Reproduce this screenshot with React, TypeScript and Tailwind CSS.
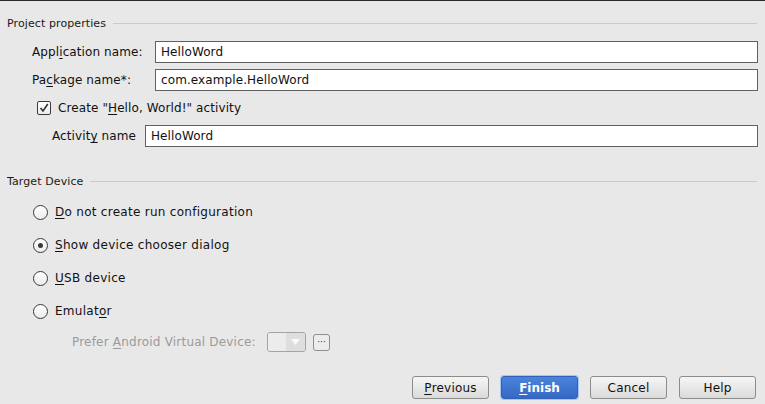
import type { ReactNode } from "react";

// New project wizard: project properties + target device
const U = ({ children }: { children: ReactNode }) => (
  <span className="underline underline-offset-[2px] decoration-[1px]">{children}</span>
);

function SectionHeader({ title }: { title: string }) {
  return (
    <div className="flex h-[14px] items-center gap-[7px] pl-[7px] pr-[8px]">
      <span className="text-[11px] leading-none tracking-[0.1px] text-[#1a1a1a]">{title}</span>
      <div className="h-px flex-1 bg-[#cacaca]" />
    </div>
  );
}

function TextField({ value, width }: { value: string; width: string }) {
  return (
    <div
      className={`flex h-[22px] ${width} items-center border border-[#606060] bg-white px-[5px] text-[12px] tracking-[0.1px] text-[#111]`}
    >
      {value}
    </div>
  );
}

function Radio({ checked, label }: { checked?: boolean; label: ReactNode }) {
  return (
    <div className="flex h-[18px] items-center pl-[33px]">
      <div className="flex h-[15px] w-[15px] items-center justify-center rounded-full border border-[#3a3a3a] bg-gradient-to-b from-white to-[#ececec]">
        {checked && <div className="h-[5px] w-[5px] rounded-full bg-[#3a3a3a]" />}
      </div>
      <span className="ml-[7px] text-[12px] tracking-[0.28px] text-[#111]">{label}</span>
    </div>
  );
}

function Button({ children, primary }: { children: ReactNode; primary?: boolean }) {
  if (primary) {
    return (
      <div className="flex h-[23px] w-[77px] items-center justify-center rounded-[3px] border border-[#2f62b8] bg-gradient-to-b from-[#4a84dc] to-[#3568c4] text-[12px] font-bold text-white shadow-[0_0_0_1px_#a9c6ee]">
        {children}
      </div>
    );
  }
  return (
    <div className="flex h-[23px] w-[77px] items-center justify-center rounded-[3px] border border-[#8c8c8c] bg-gradient-to-b from-[#f6f6f6] to-[#dadada] text-[12px] tracking-[0.2px] text-[#111]">
      {children}
    </div>
  );
}

export default function App() {
  return (
    <div
      className="flex h-[404px] w-[765px] flex-col overflow-hidden border-t border-[#2b2b2b] bg-[#e8e8e8] text-[12px] text-[#111]"
      style={{ fontFamily: "'DejaVu Sans', sans-serif" }}
    >
      <div className="mt-[15px]">
        <SectionHeader title="Project properties" />
      </div>

      <div className="mt-[11px] flex h-[22px] items-center">
        <span className="w-[155px] pl-[32px] tracking-[0.1px]">
          Appl<U>i</U>cation name:
        </span>
        <TextField value="HelloWord" width="w-[603px]" />
      </div>
      <div className="mt-[6px] flex h-[22px] items-center">
        <span className="w-[155px] pl-[32px] tracking-[0.1px]">
          Pa<U>c</U>kage name*:
        </span>
        <TextField value="com.example.HelloWord" width="w-[603px]" />
      </div>

      <div className="mt-[9px] flex h-[16px] items-center pl-[37px]">
        <div className="flex h-[14px] w-[14px] items-center justify-center rounded-[2px] border border-[#3a3a3a] bg-gradient-to-b from-white to-[#ececec]">
          <svg width="10" height="10" viewBox="0 0 10 10">
            <path d="M1.5 5 L4 8 L8.8 1" fill="none" stroke="#333" strokeWidth="1.6" />
          </svg>
        </div>
        <span className="ml-[7px] tracking-[0.1px]">
          Create "<U>H</U>ello, World!" activity
        </span>
      </div>

      <div className="mt-[9px] flex h-[22px] items-center">
        <span className="w-[145px] pl-[52px] tracking-[0.1px]">
          Activit<U>y</U> name
        </span>
        <TextField value="HelloWord" width="w-[613px]" />
      </div>

      <div className="mt-[27px]">
        <SectionHeader title="Target Device" />
      </div>

      <div className="mt-[15px] flex flex-col gap-[15px]">
        <Radio label={<><U>D</U>o not create run configuration</>} />
        <Radio checked label={<><U>S</U>how device chooser dialog</>} />
        <Radio label={<><U>U</U>SB device</>} />
        <Radio label={<>Emulat<U>o</U>r</>} />
      </div>

      <div className="mt-[12px] flex h-[20px] items-center pl-[72px] text-[#9b9b9b]">
        <span className="w-[195px] tracking-[0.2px]">
          Prefer <U>A</U>ndroid Virtual Device:
        </span>
        <div className="flex h-[20px] w-[39px] overflow-hidden rounded-[3px] border border-[#a3a3a3]">
          <div className="flex-1 bg-[#ececec]" />
          <div className="flex w-[19px] items-center justify-center bg-[#dedede]">
            <svg width="9" height="6" viewBox="0 0 9 6">
              <path d="M0 0 H9 L4.5 6 Z" fill="#fbfbfb" />
            </svg>
          </div>
        </div>
        <div className="ml-[7px] flex h-[17px] w-[17px] items-end justify-center rounded-[3px] border border-[#8f8f8f] bg-[#ececec] pb-[3px] text-[9px] leading-none text-[#333]">
          ···
        </div>
      </div>

      <div className="mt-[24px] flex justify-end gap-[12px] pr-[9px]">
        <Button>
          <U>P</U>revious
        </Button>
        <Button primary>
          <U>F</U>inish
        </Button>
        <Button>Cancel</Button>
        <Button>Help</Button>
      </div>
    </div>
  );
}
